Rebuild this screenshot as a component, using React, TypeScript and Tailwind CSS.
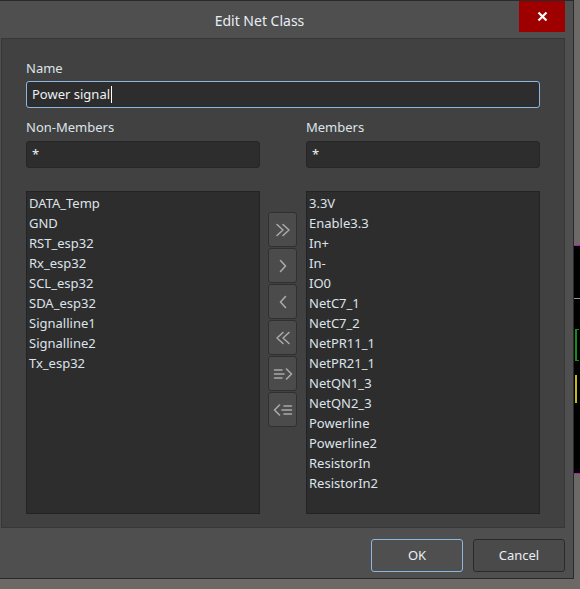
import React from "react";

const nonMembers = ["DATA_Temp", "GND", "RST_esp32", "Rx_esp32", "SCL_esp32", "SDA_esp32", "Signalline1", "Signalline2", "Tx_esp32"];
const members = ["3.3V", "Enable3.3", "In+", "In-", "IO0", "NetC7_1", "NetC7_2", "NetPR11_1", "NetPR21_1", "NetQN1_3", "NetQN2_3", "Powerline", "Powerline2", "ResistorIn", "ResistorIn2"];

function MoveIcon({ kind }: { kind: string }) {
    const s = { stroke: "#a9a9a9", strokeWidth: 1.6, fill: "none", strokeLinecap: "round" as const, strokeLinejoin: "round" as const };
    if (kind === "allRight")
        return (
            <svg width="16" height="14" viewBox="0 0 16 14">
                <path d="M2 1.5 L8 7 L2 12.5 M8 1.5 L14 7 L8 12.5" {...s} />
            </svg>
        );
    if (kind === "right")
        return (
            <svg width="10" height="14" viewBox="0 0 10 14">
                <path d="M2.5 1.5 L7.5 7 L2.5 12.5" {...s} />
            </svg>
        );
    if (kind === "left")
        return (
            <svg width="10" height="14" viewBox="0 0 10 14">
                <path d="M7.5 1.5 L2.5 7 L7.5 12.5" {...s} />
            </svg>
        );
    if (kind === "allLeft")
        return (
            <svg width="16" height="14" viewBox="0 0 16 14">
                <path d="M8 1.5 L2 7 L8 12.5 M14 1.5 L8 7 L14 12.5" {...s} />
            </svg>
        );
    if (kind === "selRight")
        return (
            <svg width="20" height="12" viewBox="0 0 20 12">
                <path d="M1.5 2 H9 M1.5 6 H11 M1.5 10 H9 M13.5 1 L18.5 6 L13.5 11" {...s} />
            </svg>
        );
    return (
        <svg width="20" height="12" viewBox="0 0 20 12">
            <path d="M18.5 2 H11 M18.5 6 H9 M18.5 10 H11 M6.5 1 L1.5 6 L6.5 11" {...s} />
        </svg>
    );
}

function NetList({ items }: { items: string[] }) {
    return (
        <div className="h-[323px] w-[234px] border border-[#232323] bg-[#2d2d2d] pl-[2px] pt-px">
            {items.map((n) => (
                <div key={n} className="h-[20px] leading-[20px] text-[#dde3ea]">
                    {n}
                </div>
            ))}
        </div>
    );
}

export default function App() {
    return (
        <div className="flex h-[589px] w-[580px] bg-[#6d6967] text-[13px]" style={{ fontFamily: '"Noto Sans", "Open Sans", sans-serif' }}>
            <div className="flex h-[579px] w-[574px] flex-col border border-[#2a2a2a] border-l-0 bg-[#4f4f4f]">
                {/* title bar */}
                <div className="flex h-[37px]">
                    <div className="flex flex-1 justify-center pt-[9px] text-[14px] text-[#e8eef5]">Edit Net Class</div>
                    <div className="mr-[8px] flex h-[31px] w-[46px] items-center justify-center bg-[#9e0000]">
                        <svg width="11" height="11" viewBox="0 0 11 11">
                            <path d="M1.5 1.5 L9.5 9.5 M9.5 1.5 L1.5 9.5" stroke="#ffffff" strokeWidth="2.2" />
                        </svg>
                    </div>
                </div>

                {/* body panel */}
                <div className="ml-px mr-[8px] flex flex-col border border-[#373737] bg-[#414141] pl-[24px] pt-[20px] pb-[13px]">
                    <div className="h-[18px] leading-[18px] text-[#dde3ea]">Name</div>
                    <div className="mt-[4px] flex h-[27px] w-[514px] items-center rounded-[3px] border border-[#8cb7e2] bg-[#2d2d2d] pl-[5px] text-[#ecf0f4]">
                        Power signal<span className="ml-px h-[17px] w-px bg-white" />
                    </div>

                    <div className="mt-[10px] flex gap-[46px]">
                        <div className="flex w-[234px] flex-col">
                            <div className="h-[18px] leading-[18px] text-[#dde3ea]">Non-Members</div>
                            <div className="mt-[5px] h-[27px] rounded-[3px] border border-[#262626] bg-[#2d2d2d] pl-[5px] pt-[3px] text-[#ecf0f4]">*</div>
                        </div>
                        <div className="flex w-[234px] flex-col">
                            <div className="h-[18px] leading-[18px] text-[#dde3ea]">Members</div>
                            <div className="mt-[5px] h-[27px] rounded-[3px] border border-[#262626] bg-[#2d2d2d] pl-[5px] pt-[3px] text-[#ecf0f4]">*</div>
                        </div>
                    </div>

                    <div className="mt-[23px] flex">
                        <NetList items={nonMembers} />
                        <div className="ml-[8px] mr-[9px] flex w-[29px] flex-col gap-px pt-[21px]">
                            {["allRight", "right", "left", "allLeft", "selRight", "selLeft"].map((k) => (
                                <div key={k} className="flex h-[35px] items-center justify-center rounded-[3px] border border-[#303030] bg-[#4b4b4b]">
                                    <MoveIcon kind={k} />
                                </div>
                            ))}
                        </div>
                        <NetList items={members} />
                    </div>
                </div>

                {/* footer */}
                <div className="mr-[8px] mt-[11px] flex justify-end gap-[10px]">
                    <button className="h-[33px] w-[92px] rounded-[3px] border border-[#8cb7e2] bg-[#4f4f4f] text-[#e8eef5]">OK</button>
                    <button className="h-[33px] w-[92px] rounded-[3px] border border-[#2a2a2a] bg-[#4a4a4a] text-[#e8eef5]">Cancel</button>
                </div>
            </div>

            {/* background application behind the dialog */}
            <div className="flex w-[6px] flex-col">
                <div className="h-[245px]" />
                <div className="flex h-[229px] flex-col border-y border-[#c010c0] bg-black">
                    <div className="mt-[52px] h-px w-[6px] bg-[#9a9a7a]" />
                    <div className="mt-[30px] ml-px h-[32px] w-[4px] border-l-2 border-t border-b border-[#1a8a1a]" />
                    <div className="mt-[14px] ml-px h-[28px] w-[2px] bg-[#c8b820]" />
                </div>
            </div>
        </div>
    );
}
